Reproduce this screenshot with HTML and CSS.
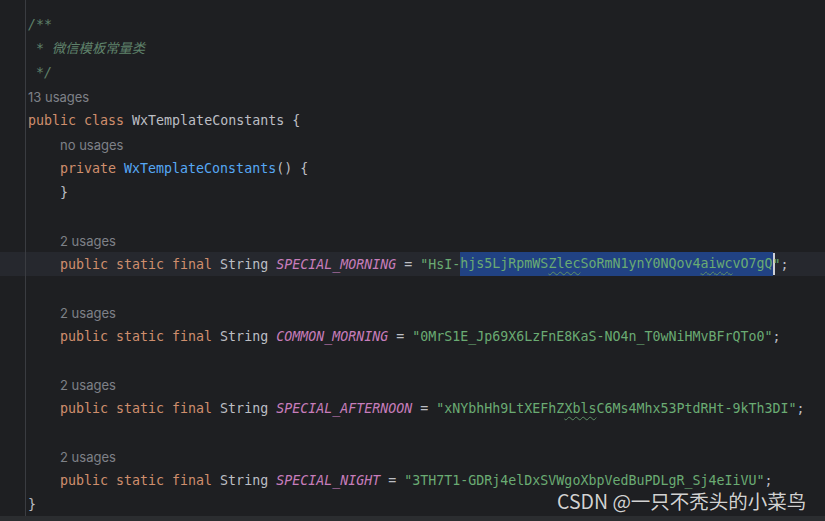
FILE: index.html
```html
<!DOCTYPE html>
<html lang="zh">
<head>
<meta charset="utf-8">
<title>WxTemplateConstants</title>
<link rel="stylesheet" href="styles.css">
</head>
<body>
<div class="editor">
  <div class="code">
    <div class="line top"></div>
    <div class="line"><span class="c">/**</span></div>
    <div class="line"><span class="c"> * 微信模板常量类</span></div>
    <div class="line"><span class="c"> */</span></div>
    <div class="line"><span class="hint">13 usages</span></div>
    <div class="line"><span class="k">public class </span>WxTemplateConstants {</div>
    <div class="line in"><span class="hint">no usages</span></div>
    <div class="line in"><span class="k">private </span><span class="m">WxTemplateConstants</span>() {</div>
    <div class="line in">}</div>
    <div class="line"></div>
    <div class="line in"><span class="hint">2 usages</span></div>
    <div class="line in current"><span class="k">public static final </span>String <span class="f">SPECIAL_MORNING</span> = <span class="s">"HsI-<span class="sel">hjs5LjRpmWS<span class="typo">Zlec</span>SoRmN1ynY0NQov4<span class="typo">aiwc</span>vO7gQ</span><span class="caret"></span>"</span>;</div>
    <div class="line"></div>
    <div class="line in"><span class="hint">2 usages</span></div>
    <div class="line in"><span class="k">public static final </span>String <span class="f">COMMON_MORNING</span> = <span class="s">"0MrS1E_Jp69X6LzFnE8KaS-NO4n_T0wNiHMvBFrQTo0"</span>;</div>
    <div class="line"></div>
    <div class="line in"><span class="hint">2 usages</span></div>
    <div class="line in"><span class="k">public static final </span>String <span class="f">SPECIAL_AFTERNOON</span> = <span class="s">"xNYbhHh9LtXEFhZ<span class="typo">Xbls</span>C6Ms4Mhx53PtdRHt-9kTh3DI"</span>;</div>
    <div class="line"></div>
    <div class="line in"><span class="hint">2 usages</span></div>
    <div class="line in"><span class="k">public static final </span>String <span class="f">SPECIAL_NIGHT</span> = <span class="s">"3TH7T1-GDRj4elDxSVWgoXbpVedBuPDLgR_Sj4eIiVU"</span>;</div>
    <div class="line">}</div>
  </div>
  <div class="hscroll"></div>
  <div class="watermark">CSDN @一只不秃头的小菜鸟</div>
</div>
</body>
</html>
```
FILE: styles.css
```css
html, body {
  margin: 0;
  padding: 0;
  background: #1e1f22;
}

.editor {
  position: relative;
  width: 825px;
  height: 521px;
  overflow: hidden;
  background: #1e1f22;
  display: flex;
  flex-direction: column;
}

.code {
  flex: 1;
  background: linear-gradient(to right, transparent 25px, #3a3c41 25px, #3a3c41 26px, transparent 26px);
}

.line {
  box-sizing: border-box;
  height: 24px;
  padding-top: 1px;
  line-height: 24px;
  padding-left: 28px;
  white-space: pre;
  font-family: "DejaVu Sans Mono", "Noto Sans CJK SC", monospace;
  font-size: 13.3px;
  color: #bcbec4;
}

.line.top {
  height: 12px;
}

.line.in {
  padding-left: 60px;
}

.line.current {
  background: linear-gradient(to right, transparent 25px, #3a3c41 25px, #3a3c41 26px, transparent 26px), #26282e;
}

.c {
  color: #5f826b;
  font-style: italic;
}

.k {
  color: #cf8e6d;
}

.m {
  color: #56a8f5;
}

.f {
  color: #c77dbb;
  font-style: italic;
}

.s {
  color: #6aab73;
}

.sel {
  display: inline-block;
  height: 24px;
  line-height: 24px;
  margin-top: -1px;
  vertical-align: top;
  background: #214283;
}

.typo {
  text-decoration: underline wavy #5d8f65;
  text-decoration-thickness: 1px;
  text-underline-offset: 3px;
}

.caret {
  display: inline-block;
  width: 2px;
  height: 22px;
  margin-right: -2px;
  vertical-align: top;
  background: #ced0d6;
}

.hint {
  font-family: Inter, "Noto Sans", sans-serif;
  font-size: 13px;
  color: #7e8188;
}

.hscroll {
  height: 5px;
  background: #2b2d30;
}

.watermark {
  position: absolute;
  left: 557px;
  top: 493px;
  font-family: "Noto Sans CJK SC", sans-serif;
  font-size: 19.5px;
  line-height: 16px;
  color: #d2d2d2;
  white-space: nowrap;
  text-shadow: 0 0 1px rgba(0, 0, 0, 0.4);
}
```
